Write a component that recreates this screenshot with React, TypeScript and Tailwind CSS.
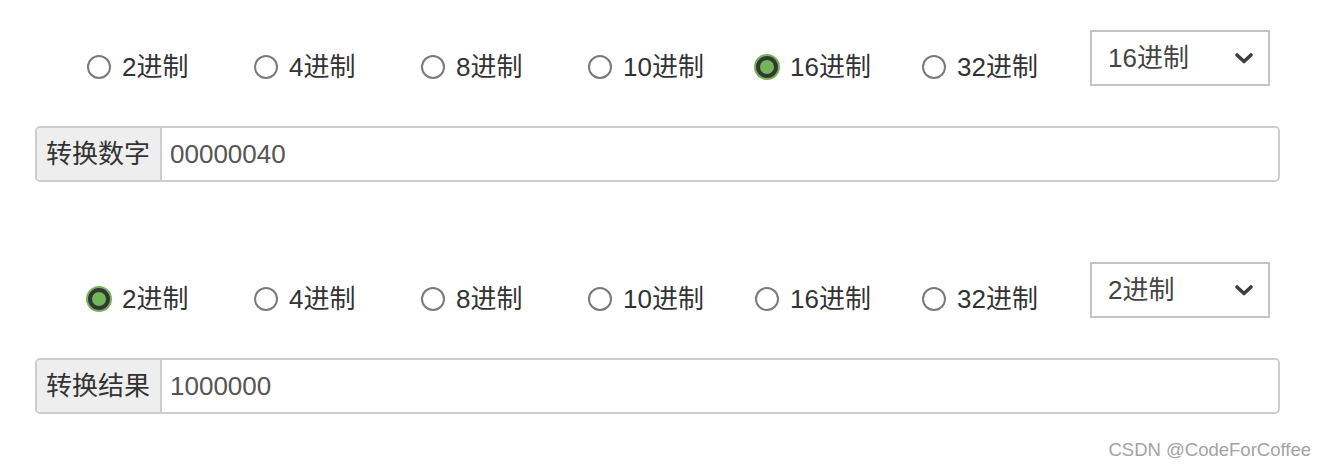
import React from "react";

const bases = ["2进制", "4进制", "8进制", "10进制", "16进制", "32进制"];

const font = {
  fontFamily: '"Liberation Sans", "Noto Sans CJK SC", sans-serif',
};

function Radio({ checked }: { checked: boolean }) {
  return (
    <span className="flex h-[26px] w-[26px] items-center justify-center">
      {checked ? (
        <span className="flex h-[26px] w-[26px] items-center justify-center rounded-full bg-[#71b657]">
          <span className="h-[22px] w-[22px] rounded-full border-[4px] border-[#363636] bg-[#71b657]" />
        </span>
      ) : (
        <span className="h-[24px] w-[24px] rounded-full border-2 border-[#7a7a7a] bg-white" />
      )}
    </span>
  );
}

function Section({
  selected,
  label,
  value,
  className,
}: {
  selected: string;
  label: string;
  value: string;
  className: string;
}) {
  return (
    <div className={className}>
      <div className="flex items-start">
        <div className="ml-[51px] mt-[24px] flex h-[26px] items-center">
          {bases.map((b) => (
            <label key={b} className="flex w-[167px] items-center gap-[10px] text-[26px] leading-none text-[#333]">
              <Radio checked={b === selected} />
              <span className="-mt-[1px]">{b}</span>
            </label>
          ))}
        </div>
        <div className="ml-auto mr-[10px] flex h-[56px] w-[180px] items-center justify-between border-2 border-[#c4c4c4] bg-white pl-[16px] pr-[14px] text-[26px] text-[#444]">
          <span>{selected}</span>
          <svg width="20" height="14" viewBox="0 0 20 14">
            <path d="M3 4 L10 10.5 L17 4" fill="none" stroke="#3f3f3f" strokeWidth="3.6" strokeLinecap="round" strokeLinejoin="round" />
          </svg>
        </div>
      </div>
      <div className="mt-[40px] flex h-[56px] overflow-hidden rounded-[5px] border-2 border-[#cdcdcd]">
        <div className="flex w-[125px] items-center border-r-2 border-[#cdcdcd] bg-[#eeeeee] pl-[9px] text-[26px] text-[#333]">
          {label}
        </div>
        <div className="flex flex-1 items-center bg-white pl-[8px] text-[26px] text-[#555]">
          {value}
        </div>
      </div>
    </div>
  );
}

export default function App() {
  return (
    <div className="relative h-[468px] w-[1326px] overflow-hidden bg-white" style={font}>
      <div className="px-[35px] pr-[46px]">
        <Section className="pt-[30px]" selected="16进制" label="转换数字" value="00000040" />
        <Section className="pt-[80px]" selected="2进制" label="转换结果" value="1000000" />
      </div>
      <div className="absolute right-[15px] bottom-[4px] text-[18.5px] text-[#a3a3a3]">
        CSDN @CodeForCoffee
      </div>
    </div>
  );
}
